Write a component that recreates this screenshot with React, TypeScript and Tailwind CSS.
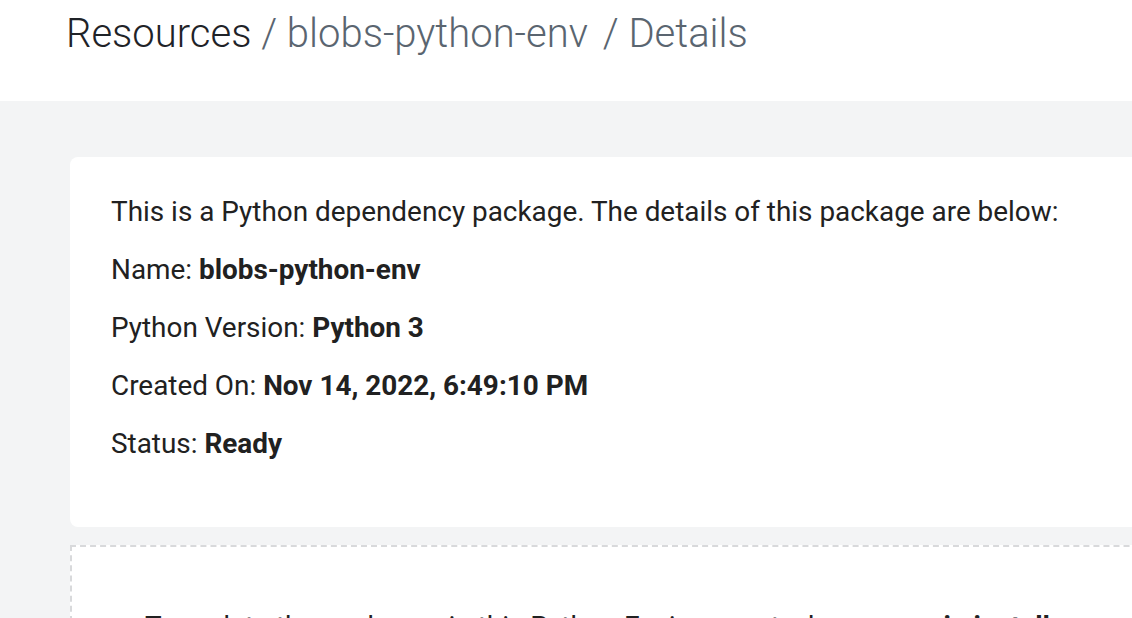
import React from "react";

export default function App() {
  return (
    <div className="w-[1132px] h-[618px] overflow-hidden bg-[#f3f4f5] font-['Roboto',sans-serif]">
      <div className="h-[101px] bg-white pl-[66px] pt-[10px]">
        <div className="text-[40px] leading-[48px] whitespace-nowrap font-light">
          <span className="text-[#1f2328]">Resources</span>
          <span className="text-[#5a6570]"> / blobs-python-env <span className="ml-[5px]">/</span> Details</span>
        </div>
      </div>
      <div className="pl-[70px] pt-[56px] flex flex-col gap-[18px]">
        <div className="w-[1200px] h-[370px] bg-white rounded-[8px] pl-[41px] pt-[38px] text-[27.9px] text-[#212121] leading-[34px] flex flex-col gap-[24px] whitespace-nowrap">
          <p>This is a Python dependency package. The details of this package are below:</p>
          <p>Name: <b>blobs-python-env</b></p>
          <p>Python Version: <b>Python 3</b></p>
          <p>Created On: <b>Nov 14, 2022, 6:49:10 PM</b></p>
          <p>Status: <b>Ready</b></p>
        </div>
        <div className="w-[1200px] h-[300px] bg-white border-2 border-dashed border-[#d8d9db] pl-[73px] pt-[63px] text-[27.9px] text-[#212121] leading-[34px]">
          <p className="whitespace-nowrap">To update the packages in this Python Environment, please run <b>pip install</b></p>
        </div>
      </div>
    </div>
  );
}
